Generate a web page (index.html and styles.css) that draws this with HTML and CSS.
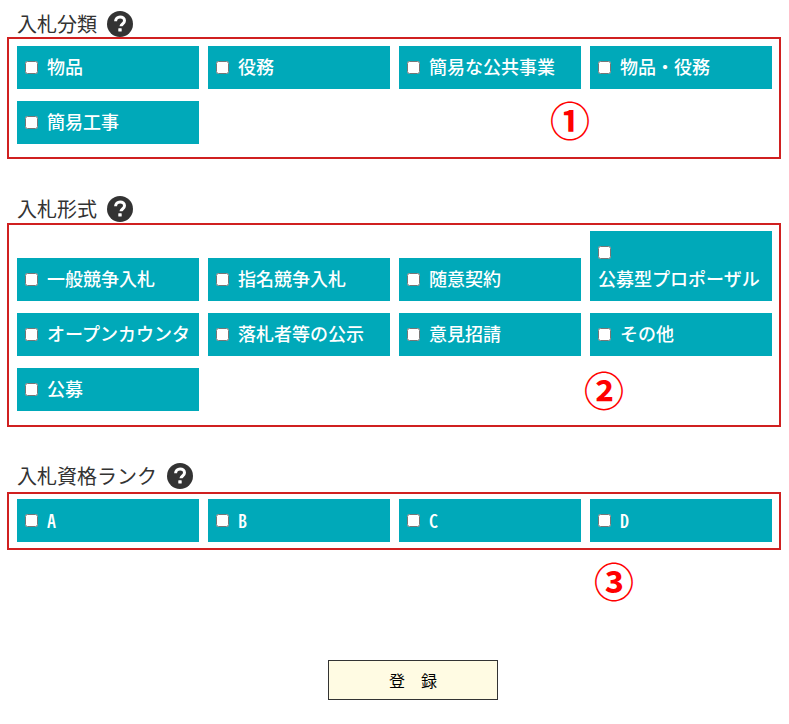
FILE: index.html
```html
<!DOCTYPE html>
<html lang="ja">

<head>
    <meta charset="UTF-8">
    <meta name="viewport" content="width=device-width, initial-scale=1.0">
    <title>入札情報登録</title>
    <link rel="stylesheet" href="styles.css">
</head>

<body>
    <div class="container">
        <section class="group group-type">
            <h2 class="group-title">入札分類
                <svg class="help-icon" viewBox="0 0 26 26"><circle cx="13" cy="13" r="13" fill="#333"/><path d="M8.6 10.2c0-2.7 2-4.3 4.5-4.3s4.4 1.5 4.4 3.8c0 3.3-3.5 3.2-3.5 5.6" fill="none" stroke="#fff" stroke-width="3"/><rect x="11.3" y="17.2" width="3.4" height="3.4" rx="0.6" fill="#fff"/></svg>
            </h2>
            <div class="choices">
                <label class="choice"><input type="checkbox"><span>物品</span></label>
                <label class="choice"><input type="checkbox"><span>役務</span></label>
                <label class="choice"><input type="checkbox"><span>簡易な公共事業</span></label>
                <label class="choice"><input type="checkbox"><span>物品・役務</span></label>
                <label class="choice"><input type="checkbox"><span>簡易工事</span></label>
                <div class="note note-1">①</div>
            </div>
        </section>

        <section class="group group-form">
            <h2 class="group-title">入札形式
                <svg class="help-icon" viewBox="0 0 26 26"><circle cx="13" cy="13" r="13" fill="#333"/><path d="M8.6 10.2c0-2.7 2-4.3 4.5-4.3s4.4 1.5 4.4 3.8c0 3.3-3.5 3.2-3.5 5.6" fill="none" stroke="#fff" stroke-width="3"/><rect x="11.3" y="17.2" width="3.4" height="3.4" rx="0.6" fill="#fff"/></svg>
            </h2>
            <div class="choices choices-form">
                <label class="choice"><input type="checkbox"><span>一般競争入札</span></label>
                <label class="choice"><input type="checkbox"><span>指名競争入札</span></label>
                <label class="choice"><input type="checkbox"><span>随意契約</span></label>
                <label class="choice choice-wrap"><input type="checkbox"><span>公募型プロポーザル</span></label>
                <label class="choice"><input type="checkbox"><span>オープンカウンタ</span></label>
                <label class="choice"><input type="checkbox"><span>落札者等の公示</span></label>
                <label class="choice"><input type="checkbox"><span>意見招請</span></label>
                <label class="choice"><input type="checkbox"><span>その他</span></label>
                <label class="choice"><input type="checkbox"><span>公募</span></label>
                <div class="note note-2">②</div>
            </div>
        </section>

        <section class="group group-rank">
            <h2 class="group-title">入札資格ランク
                <svg class="help-icon" viewBox="0 0 26 26"><circle cx="13" cy="13" r="13" fill="#333"/><path d="M8.6 10.2c0-2.7 2-4.3 4.5-4.3s4.4 1.5 4.4 3.8c0 3.3-3.5 3.2-3.5 5.6" fill="none" stroke="#fff" stroke-width="3"/><rect x="11.3" y="17.2" width="3.4" height="3.4" rx="0.6" fill="#fff"/></svg>
            </h2>
            <div class="choices choices-rank">
                <label class="choice"><input type="checkbox"><span>A</span></label>
                <label class="choice"><input type="checkbox"><span>B</span></label>
                <label class="choice"><input type="checkbox"><span>C</span></label>
                <label class="choice"><input type="checkbox"><span>D</span></label>
                <div class="note note-3">③</div>
            </div>
        </section>

        <div class="actions">
            <button class="submit" type="button">登　録</button>
        </div>
    </div>
</body>

</html>
```

FILE: styles.css
```css
body {
    font-family: "Noto Sans CJK JP", "Noto Sans", sans-serif;
    margin: 0;
    padding: 0;
    background-color: white;
    color: #333;
}

.container {
    padding: 11px 8px 0 7px;
}

.group-title {
    display: flex;
    align-items: center;
    gap: 10px;
    height: 26px;
    margin: 0;
    padding-left: 10px;
    font-size: 20px;
    font-weight: normal;
    line-height: 26px;
}

.help-icon {
    width: 26px;
    height: 26px;
}

.group-form {
    margin-top: 37px;
}

.group-rank {
    margin-top: 36px;
}

.choices {
    position: relative;
    display: grid;
    grid-template-columns: repeat(4, 182px);
    column-gap: 9px;
    row-gap: 12px;
    align-items: end;
    padding: 7px 7px 13px 8px;
    border: 2px solid #d02020;
}

.choices-form {
    margin-top: 1px;
    padding-top: 6px;
    padding-bottom: 14px;
}

.choices-rank {
    margin-top: 3px;
    padding-top: 5px;
    padding-bottom: 6px;
}

.choice {
    display: flex;
    flex-wrap: wrap;
    align-items: center;
    min-height: 43px;
    box-sizing: border-box;
    padding: 0 8px;
    background-color: #00a9b9;
    color: white;
    font-size: 18px;
    font-weight: 500;
    line-height: 27px;
    cursor: pointer;
}

.choice span {
    padding-bottom: 2px;
    line-height: 25px;
}

.choice input {
    width: 13px;
    height: 13px;
    margin: 0 9px 0 0;
}

.choice-wrap {
    padding: 8px;
}

.choice-wrap input {
    margin-top: 7px;
    margin-bottom: 7px;
}

.choice-wrap span {
    width: 100%;
}

.choices-rank .choice {
    font-feature-settings: "hwid";
}

.choices-rank .choice span {
    padding-bottom: 0;
    line-height: 27px;
}

.note {
    position: absolute;
    color: #f00;
    font-size: 40px;
    font-weight: bold;
    line-height: 40px;
}

.note-1 {
    left: 541px;
    top: 60px;
}

.note-2 {
    left: 575px;
    top: 144px;
}

.note-3 {
    left: 585px;
    top: 66px;
}

.actions {
    display: flex;
    justify-content: center;
    margin-top: 110px;
    padding-left: 38px;
}

.submit {
    width: 170px;
    height: 40px;
    background-color: #fffbe3;
    border: 1px solid #333;
    color: #000;
    font-family: "Noto Sans CJK JP", sans-serif;
    font-size: 16px;
    cursor: pointer;
}
```
